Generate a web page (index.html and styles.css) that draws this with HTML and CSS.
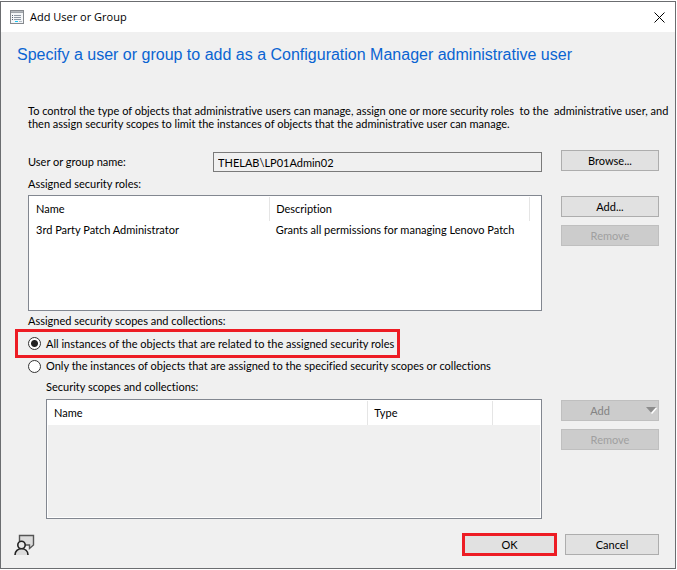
FILE: index.html
```
<!DOCTYPE html>
<html lang="en">

<head>
    <meta charset="UTF-8">
    <meta name="viewport" content="width=device-width, initial-scale=1.0">
    <title>Add User or Group</title>
    <link rel="stylesheet" href="styles.css">
</head>

<body>
    <div class="dialog" role="dialog" aria-labelledby="dialogTitle">
        <header class="titlebar">
            <svg class="app-icon" width="14" height="14" viewBox="0 0 14 14" shape-rendering="crispEdges">
                <rect x="0.5" y="0.5" width="13" height="13" fill="#f4f6f8" stroke="#85898e" />
                <path d="M1 1.5h12" stroke="#b4b8bd" />
                <path d="M1 2.5h12" stroke="#a0a5ab" />
                <path d="M2 5.5h1M2 7.5h1M2 9.5h1" stroke="#55606e" />
                <path d="M4 5.5h7M4 7.5h7M4 9.5h7" stroke="#8f98a4" />
                <path d="M5 11.5h3" stroke="#19c5f2" />
                <path d="M9 11.5h3" stroke="#b4bac2" />
            </svg>
            <span class="titlebar-text" id="dialogTitle">Add User or Group</span>
            <button class="close" type="button" aria-label="Close">
                <svg width="11" height="11" viewBox="0 0 11 11">
                    <path d="M0.5 0.5l10 10M10.5 0.5l-10 10" stroke="#000" stroke-width="1" fill="none" />
                </svg>
            </button>
        </header>

        <form class="content">
            <h1>Specify a user or group to add as a Configuration Manager administrative user</h1>

            <p class="intro">To control the type of objects that administrative users can manage, assign one or more security roles&nbsp; to the&nbsp; administrative user, and then assign security scopes to limit the instances of objects that the administrative user can manage.</p>

            <div class="row">
                <div class="field">
                    <label for="userName">User or group name:</label>
                    <input type="text" id="userName" value="THELAB\LP01Admin02" readonly>
                </div>
                <button class="btn" type="button">Browse...</button>
            </div>

            <div class="caption" id="rolesLabel">Assigned security roles:</div>
            <div class="row">
                <div class="list roles">
                    <table aria-labelledby="rolesLabel">
                        <colgroup>
                            <col class="col-role">
                            <col class="col-description">
                            <col>
                        </colgroup>
                        <thead>
                            <tr>
                                <th>Name</th>
                                <th>Description</th>
                                <th></th>
                            </tr>
                        </thead>
                        <tbody>
                            <tr>
                                <td>3rd Party Patch Administrator</td>
                                <td>Grants all permissions for managing Lenovo Patch</td>
                                <td></td>
                            </tr>
                        </tbody>
                    </table>
                </div>
                <div class="buttons">
                    <button class="btn" type="button">Add...</button>
                    <button class="btn" type="button" disabled>Remove</button>
                </div>
            </div>

            <div class="caption scope-caption" id="scopeLabel">Assigned security scopes and collections:</div>
            <div class="scope-options" role="radiogroup" aria-labelledby="scopeLabel">
                <div class="option highlight">
                    <input type="radio" name="scope" id="scopeAll" checked>
                    <label for="scopeAll">All instances of the objects that are related to the assigned security roles</label>
                </div>
                <div class="option">
                    <input type="radio" name="scope" id="scopeOnly">
                    <label for="scopeOnly">Only the instances of objects that are assigned to the specified security scopes or collections</label>
                </div>
            </div>

            <div class="caption indent" id="collectionsLabel">Security scopes and collections:</div>
            <div class="row indent">
                <div class="list collections">
                    <table aria-labelledby="collectionsLabel">
                        <colgroup>
                            <col class="col-collection">
                            <col class="col-type">
                            <col>
                        </colgroup>
                        <thead>
                            <tr>
                                <th>Name</th>
                                <th>Type</th>
                                <th></th>
                            </tr>
                        </thead>
                    </table>
                </div>
                <div class="buttons">
                    <button class="btn btn-split" type="button" disabled>
                        <span>Add</span>
                        <svg width="11" height="7" viewBox="0 0 11 7">
                            <path d="M10.5 1L5.5 6.5" stroke="#fff" stroke-width="1.5" />
                            <path d="M0 0h10L5 5.5z" fill="#8c8c8c" />
                        </svg>
                    </button>
                    <button class="btn" type="button" disabled>Remove</button>
                </div>
            </div>
        </form>

        <footer class="footer">
            <button class="feedback" type="button" aria-label="Feedback">
                <svg width="22" height="22" viewBox="0 0 22 22" fill="none">
                    <path d="M5.5 7V1.5h14v9.5l-4 3.5v-3.5h-5" fill="#dcdcdc" stroke="#555" stroke-width="1.4" />
                    <circle cx="7.5" cy="11" r="3.7" fill="#e8e8e8" stroke="#222" stroke-width="1.6" />
                    <path d="M1 21c0-4 3-6.3 6.5-6.3S14 17 14 21" fill="#dcdcdc" stroke="#222" stroke-width="1.6" />
                </svg>
            </button>
            <button class="btn btn-ok" type="button">OK</button>
            <button class="btn btn-cancel" type="button">Cancel</button>
        </footer>
    </div>
</body>

</html>
```
FILE: styles.css
```
:root {
    --face: #f0f0f0;
    --window-border: #6b6d70;
    --list-border: #828790;
    --divider: #e5e5e5;
    --button-face: #e1e1e1;
    --button-border: #adadad;
    --disabled-face: #cccccc;
    --disabled-border: #bfbfbf;
    --disabled-text: #a0a0a0;
    --heading: #0a64d2;
    --highlight: #ed1c24;
    --font-family: Lato, Arial, sans-serif;
    --heading-font: "Liberation Sans", Arial, sans-serif;
}

* {
    box-sizing: border-box;
}

body {
    margin: 0;
    background: #fff;
    font-family: var(--font-family);
    font-size: 11px;
    line-height: 14px;
    font-variant-ligatures: none;
    color: #000;
}

.dialog {
    display: flex;
    flex-direction: column;
    min-height: calc(100vh - 2px);
    margin: 1px 1px 1px 0;
    border: 1px solid var(--window-border);
    background: var(--face);
}

/* Title bar */
.titlebar {
    display: flex;
    align-items: center;
    height: 30px;
    padding: 0 10px 0 9px;
    background: #fff;
}

.titlebar-text {
    flex: 1;
    margin-left: 6px;
    font-family: "Open Sans", "Segoe UI", sans-serif;
    font-size: 11px;
}

.close,
.feedback {
    display: flex;
    padding: 0;
    border: 0;
    background: none;
}

/* Form */
.content {
    flex: 1;
    padding: 13px 16px 0 27px;
}

h1 {
    margin: 0 0 39px -11px;
    font-family: var(--heading-font);
    font-size: 16px;
    font-weight: normal;
    line-height: 20px;
    color: var(--heading);
}

.intro {
    margin: 0 -14px 20px 0;
    line-height: 13px;
}

.row {
    display: grid;
    grid-template-columns: 1fr 98px;
    column-gap: 19px;
    align-items: start;
}

.field {
    display: flex;
    align-items: center;
    padding-top: 2px;
}

.field label {
    width: 185px;
}

.field input {
    flex: 1;
    min-width: 0;
    height: 20px;
    padding: 0 4px;
    border: 1px solid #7a7a7a;
    background: var(--face);
    font: inherit;
    color: inherit;
}

.caption {
    margin: 5px 0 4px;
}

.indent {
    margin-left: 18px;
}

/* Lists */
.list {
    padding: 1px;
    border: 1px solid var(--list-border);
    background: #fff;
}

.roles {
    height: 116px;
}

.collections {
    height: 120px;
    background: var(--face);
    box-shadow: inset 0 0 0 1px #fff;
}

table {
    width: 100%;
    border-collapse: collapse;
    table-layout: fixed;
}

th,
td {
    padding: 0 6px;
    text-align: left;
    font-weight: normal;
    white-space: nowrap;
}

th {
    height: 24px;
    border-right: 1px solid var(--divider);
    background: #fff;
}

th:last-child {
    border-right: 0;
}

td {
    height: 18px;
}

.col-role {
    width: 47%;
}

.col-description {
    width: 51%;
}

.col-collection {
    width: 65%;
}

.col-type {
    width: 125px;
}

/* Buttons */
.buttons {
    display: flex;
    flex-direction: column;
    gap: 8px;
    padding-top: 1px;
}

.btn {
    height: 21px;
    padding: 0;
    border: 1px solid var(--button-border);
    background: var(--button-face);
    font: inherit;
    color: #000;
}

.btn:disabled {
    border-color: var(--disabled-border);
    background: var(--disabled-face);
    color: var(--disabled-text);
}

.btn-split {
    display: flex;
    align-items: center;
    padding-right: 1px;
}

.btn-split:disabled {
    color: #838383;
}

.btn-split span {
    flex: 1;
    padding-right: 8px;
}

/* Scope options */
.scope-caption {
    margin: 3px 0 1px;
}

.scope-options {
    display: flex;
    flex-direction: column;
    gap: 1px;
    margin-bottom: 7px;
}

.option {
    display: flex;
    align-items: center;
    gap: 5px;
}

.highlight {
    width: fit-content;
    height: 29px;
    margin-left: -13px;
    padding: 0 3px 0 10px;
    border: 3px solid var(--highlight);
}

.option input {
    appearance: none;
    flex: none;
    width: 13px;
    height: 13px;
    margin: 0;
    border: 1px solid #333;
    border-radius: 50%;
    background: #fff;
}

.option input:checked {
    background: radial-gradient(circle, #222 3px, #fff 4px);
}

.scope-options + .caption {
    margin-bottom: 5px;
}

/* Footer */
.footer {
    display: flex;
    align-items: center;
    gap: 8px;
    padding: 0 16px 12px 13px;
}

.feedback {
    margin-right: auto;
}

.btn-ok {
    width: 95px;
    height: 23px;
    border: 3px solid var(--highlight);
}

.btn-cancel {
    width: 94px;
}
```
